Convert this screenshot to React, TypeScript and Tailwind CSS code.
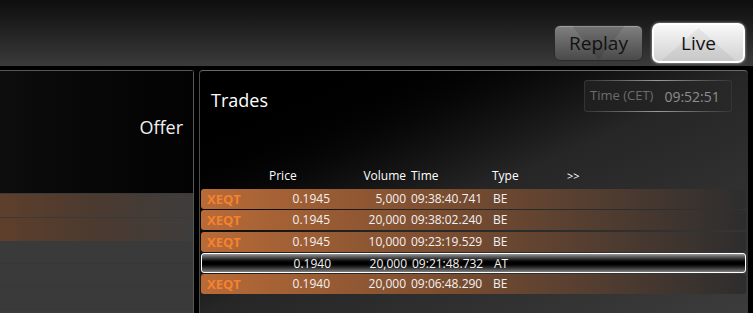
const trades = [
  { sym: "XEQT", price: "0.1945", volume: "5,000", time: "09:38:40.741", type: "BE" },
  { sym: "XEQT", price: "0.1945", volume: "20,000", time: "09:38:02.240", type: "BE" },
  { sym: "XEQT", price: "0.1945", volume: "10,000", time: "09:23:19.529", type: "BE" },
  { sym: "", price: "0.1940", volume: "20,000", time: "09:21:48.732", type: "AT", selected: true },
  { sym: "XEQT", price: "0.1940", volume: "20,000", time: "09:06:48.290", type: "BE" },
];

const cols = "grid grid-cols-[60px_69px_76px_86px_75px_1fr]";

function Bevel({ up, className }: { up?: boolean; className: string }) {
  return (
    <svg className="absolute inset-0 h-full w-full" viewBox="0 0 100 100" preserveAspectRatio="none">
      {up ? (
        <polygon points="50,8 92,100 8,100" className={className} />
      ) : (
        <polygon points="20,0 80,0 50,100" className={className} />
      )}
    </svg>
  );
}

export default function App() {
  return (
    <div className="h-[313px] w-[753px] overflow-hidden bg-black font-['Open_Sans','Noto_Sans',sans-serif]">
      {/* Top bar */}
      <div className="flex h-[66px] items-center justify-end gap-[9px] bg-linear-to-b from-[#0e0e0e] to-[#3b3b3b] pt-[20px] pr-[8px]">
        <button className="relative flex h-[36px] w-[89px] items-center justify-center overflow-hidden rounded-[6px] border border-[#2a2a2a] bg-linear-to-b from-[#808080] to-[#4a4a4a] shadow-[inset_0_1px_0_rgba(255,255,255,0.25)]">
          <Bevel className="fill-black/10" />
          <span className="relative text-[19px] leading-none text-[#111]">Replay</span>
        </button>
        <button className="relative flex h-[40px] w-[93px] items-center justify-center overflow-hidden rounded-[7px] border-2 border-white bg-linear-to-b from-[#f8f8f8] to-[#d2d2d2] shadow-[0_0_3px_rgba(255,255,255,0.7)]">
          <Bevel up className="fill-black/5" />
          <span className="relative text-[19px] leading-none text-[#111]">Live</span>
        </button>
      </div>

      <div className="mt-[4px] flex h-[243px] gap-[5px]">
        {/* Offer panel */}
        <div className="flex w-[194px] flex-col rounded-tr-[3px] border-t border-r border-[#575757]">
          <div className="flex h-[122px] justify-end bg-linear-to-r from-[#0d0d0d] to-[#030303] pt-[44px] pr-[10px]">
            <span className="text-[18px] leading-[24px] text-[#f0f0f0]">Offer</span>
          </div>
          <div className="flex flex-1 flex-col gap-px bg-[#3a3a3a] pt-px">
            <div className="h-[23px] bg-linear-to-r from-[#5e3f2b] via-[#4b3a30] to-[#3e3d3c]" />
            <div className="h-[23px] bg-linear-to-r from-[#5e3f2b] via-[#4b3a30] to-[#3e3d3c]" />
            <div className="h-[22px] border-b border-[#373737]" />
            <div className="h-[22px] border-b border-[#373737]" />
            <div className="h-[22px] border-b border-[#373737]" />
          </div>
        </div>

        {/* Trades panel */}
        <div className="flex w-[549px] flex-col rounded-t-[4px] border-t border-l border-t-[#6a6a6a] border-l-[#4a4a4a] bg-linear-to-br from-black from-10% via-[#262626] via-50% to-[#3c3c3c]">
          <div className="flex h-[96px] items-start justify-between pt-[9px] pr-[16px] pl-[11px]">
            <span className="mt-[8px] text-[18px] leading-[24px] text-white">Trades</span>
            <div className="h-[32px] w-[148px] rounded-[3px] bg-linear-to-r from-[#333] via-[#9a9a9a] to-[#333] p-px">
              <div className="flex h-full items-center rounded-[2px] bg-linear-to-r from-[#1f1f1f] to-[#282828] pl-[5px]">
                <span className="text-[13px] text-[#6c6c6c]">Time (CET)</span>
                <span className="ml-[11px] text-[14px] text-[#8d8d8d]">09:52:51</span>
              </div>
            </div>
          </div>

          <div className={`${cols} h-[22px] pl-px text-[12px] leading-[18px] text-white`}>
            <span />
            <span className="pl-[8px]">Price</span>
            <span className="text-right">Volume</span>
            <span className="pl-[5px]">Time</span>
            <span>Type</span>
            <span className="text-[11px]">&gt;&gt;</span>
          </div>

          <div className="flex flex-col gap-[1.25px] pr-[2px] pl-px">
            {trades.map((t, i) => (
              <div
                key={i}
                className={`${cols} h-[20px] items-center rounded-[3px] text-[12px] leading-[20px] text-[#f2f2f2] ${
                  t.selected
                    ? "border border-white bg-linear-to-b from-[#9a9a9a] via-black to-[#808080]"
                    : "bg-linear-to-r from-[#b96b37] via-[#7a4d30] via-45% to-[#2d2d2d]"
                }`}
              >
                <span className="pl-[6px] text-[13px] font-bold text-[#f5822f]">{t.sym}</span>
                <span className="text-right">{t.price}</span>
                <span className="text-right">{t.volume}</span>
                <span className="pl-[5px]">{t.time}</span>
                <span className="pl-px">{t.type}</span>
                <span />
              </div>
            ))}
          </div>
        </div>
      </div>
    </div>
  );
}
